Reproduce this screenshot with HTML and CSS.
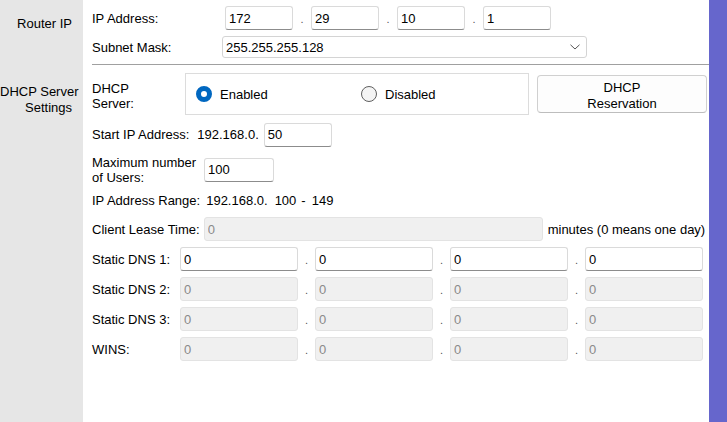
FILE: index.html
```html
<!DOCTYPE html>
<html>
<head>
<meta charset="utf-8">
<link rel="stylesheet" href="styles.css">
</head>
<body>
<div class="page">
  <div class="content">
    <div class="side-label side-router">Router IP</div>
    <div class="sect-body sect-router">
      <div class="row row-ip">
        <div class="lbl lbl-ip">IP Address:</div>
        <input class="tb tb-ip" value="172"><span class="dot dot-ip">.</span>
        <input class="tb tb-ip" value="29"><span class="dot dot-ip">.</span>
        <input class="tb tb-ip" value="10"><span class="dot dot-ip">.</span>
        <input class="tb tb-ip" value="1">
      </div>
      <div class="row row-mask">
        <div class="lbl lbl-mask">Subnet Mask:</div>
        <div class="select">
          <span>255.255.255.128</span>
          <svg class="chev" width="10" height="6" viewBox="0 0 10 6"><path d="M0.5 0.8 L5 5 L9.5 0.8" fill="none" stroke="#555" stroke-width="1"/></svg>
        </div>
      </div>
      <div class="sep"></div>
    </div>

    <div class="side-label side-dhcp">DHCP Server<br>Settings</div>
    <div class="sect-body sect-dhcp">
      <div class="row row-dhcp">
        <div class="lbl lbl-dhcp">DHCP<br>Server:</div>
        <div class="radio-box">
          <div class="radio-opt"><span class="radio radio-on"></span><span class="radio-text">Enabled</span></div>
          <div class="radio-opt"><span class="radio radio-off"></span><span class="radio-text">Disabled</span></div>
        </div>
        <div class="btn">DHCP<br>Reservation</div>
      </div>
      <div class="row row-start">
        <div class="lbl">Start IP Address:</div>
        <span class="prefix prefix-start">192.168.0.</span>
        <input class="tb tb-start" value="50">
      </div>
      <div class="row row-max">
        <div class="lbl lbl-max">Maximum number<br>of Users:</div>
        <input class="tb tb-max" value="100">
      </div>
      <div class="row row-range">
        <div class="lbl">IP Address Range:</div>
        <span class="prefix prefix-range">192.168.0.</span>
        <span class="r-from">100</span>
        <span class="r-dash">-</span>
        <span class="r-to">149</span>
      </div>
      <div class="row row-lease">
        <div class="lbl">Client Lease Time:</div>
        <input class="tb tb-lease" value="0" disabled>
        <span class="lease-note">minutes (0 means one day)</span>
      </div>
      <div class="row row-dns">
        <div class="lbl lbl-dns">Static DNS 1:</div>
        <input class="tb tb-dns" value="0"><span class="dot dot-dns">.</span>
        <input class="tb tb-dns" value="0"><span class="dot dot-dns">.</span>
        <input class="tb tb-dns" value="0"><span class="dot dot-dns">.</span>
        <input class="tb tb-dns" value="0">
      </div>
      <div class="row row-dns">
        <div class="lbl lbl-dns">Static DNS 2:</div>
        <input class="tb tb-dns" value="0" disabled><span class="dot dot-dns">.</span>
        <input class="tb tb-dns" value="0" disabled><span class="dot dot-dns">.</span>
        <input class="tb tb-dns" value="0" disabled><span class="dot dot-dns">.</span>
        <input class="tb tb-dns" value="0" disabled>
      </div>
      <div class="row row-dns">
        <div class="lbl lbl-dns">Static DNS 3:</div>
        <input class="tb tb-dns" value="0" disabled><span class="dot dot-dns">.</span>
        <input class="tb tb-dns" value="0" disabled><span class="dot dot-dns">.</span>
        <input class="tb tb-dns" value="0" disabled><span class="dot dot-dns">.</span>
        <input class="tb tb-dns" value="0" disabled>
      </div>
      <div class="row row-dns">
        <div class="lbl lbl-dns">WINS:</div>
        <input class="tb tb-dns" value="0" disabled><span class="dot dot-dns">.</span>
        <input class="tb tb-dns" value="0" disabled><span class="dot dot-dns">.</span>
        <input class="tb tb-dns" value="0" disabled><span class="dot dot-dns">.</span>
        <input class="tb tb-dns" value="0" disabled>
      </div>
    </div>
  </div>
  <div class="bar"></div>
</div>
</body>
</html>
```

FILE: styles.css
```css
html, body {
  margin: 0;
  padding: 0;
}
body {
  font: 13px/15px "Liberation Sans", Arial, sans-serif;
  color: #000;
  background: #fff;
  overflow: hidden;
}
.page {
  display: flex;
  height: 100vh;
}
.content {
  flex: 1;
  min-width: 0;
  display: grid;
  grid-template-columns: 83px 1fr;
  align-content: start;
  background: linear-gradient(to right, #e6e6e6 83px, #ffffff 83px);
}
.bar {
  width: 18px;
  flex: none;
  background: #6666cc;
}
.side-label {
  text-align: right;
  padding-right: 11px;
  line-height: 16px;
  white-space: nowrap;
}
.side-router { padding-top: 16px; }
.side-dhcp { padding-top: 19px; }

.sect-body {
  padding-left: 9px;
  display: flex;
  flex-direction: column;
  min-width: 0;
}
.sect-router { padding-top: 6px; }
.sect-dhcp { padding-top: 8px; }

.row {
  display: flex;
  align-items: center;
  white-space: nowrap;
}
.lbl { flex: none; }

.tb {
  box-sizing: border-box;
  height: 24px;
  margin: 0;
  padding: 0 3px;
  font: 13px "Liberation Sans", Arial, sans-serif;
  color: #000;
  background: #fff;
  border: 1px solid #dadada;
  border-bottom-color: #8c8c8c;
  border-radius: 3px;
  outline: none;
  flex: none;
}
.tb:disabled {
  background: #f0f0f0;
  border: 1px solid #e3e3e3;
  color: #8a8a8a;
}
.dot {
  flex: none;
  text-align: center;
  color: #555;
  font-size: 11px;
  padding-top: 3px;
}

.row-ip { height: 24px; }
.lbl-ip { width: 133px; }
.tb-ip { width: 68px; }
.dot-ip { width: 18px; }

.row-mask { height: 22px; margin-top: 6px; }
.lbl-mask { width: 130px; }
.select {
  box-sizing: border-box;
  width: 365px;
  height: 22px;
  border: 1px solid #d4d4d4;
  border-radius: 3px;
  background: #fff;
  display: flex;
  align-items: center;
  justify-content: space-between;
  padding: 0 6px 0 3px;
}
.chev { display: block; }

.sep {
  height: 1px;
  background: #a0a0a0;
  margin-top: 6px;
}

.row-dhcp {
  height: 42px;
  align-items: flex-start;
}
.lbl-dhcp {
  width: 93px;
  height: 42px;
  display: flex;
  align-items: center;
  padding-top: 3px;
  box-sizing: border-box;
}
.radio-box {
  box-sizing: border-box;
  width: 344px;
  height: 42px;
  border: 1px solid #dcdcdc;
  display: flex;
  align-items: center;
  padding-left: 10px;
  flex: none;
}
.radio-opt {
  width: 165px;
  display: flex;
  align-items: center;
}
.radio {
  box-sizing: border-box;
  width: 16px;
  height: 16px;
  border-radius: 50%;
  flex: none;
}
.radio-on {
  border: 5px solid #0067c0;
  background: #fff;
}
.radio-off {
  border: 1px solid #5f5f5f;
  background: #f4f4f4;
}
.radio-text { margin-left: 8px; padding-top: 1px; }

.btn {
  box-sizing: border-box;
  width: 170px;
  height: 38px;
  margin-top: 2px;
  margin-left: 8px;
  padding-top: 3px;
  flex: none;
  border: 1px solid #d0d0d0;
  border-bottom-color: #bdbdbd;
  border-radius: 4px;
  background: #fdfdfd;
  text-align: center;
  display: flex;
  align-items: center;
  justify-content: center;
  line-height: 16px;
}

.row-start { height: 39px; }
.prefix-start { margin-left: 8px; }
.tb-start { width: 68px; margin-left: 5px; }

.row-max { height: 31px; }
.tb-max { width: 70px; margin-left: 8px; }

.row-range { height: 29px; padding-top: 2px; box-sizing: border-box; }
.prefix-range { margin-left: 6px; }
.r-from { margin-left: 7px; }
.r-dash { margin-left: 5px; }
.r-to { margin-left: 6px; }

.row-lease { height: 30px; }
.tb-lease { width: 339px; margin-left: 4px; }
.lease-note { margin-left: 5px; }

.row-dns { height: 30px; }
.lbl-dns { width: 88px; }
.tb-dns { width: 118px; }
.dot-dns { width: 17px; }
```
